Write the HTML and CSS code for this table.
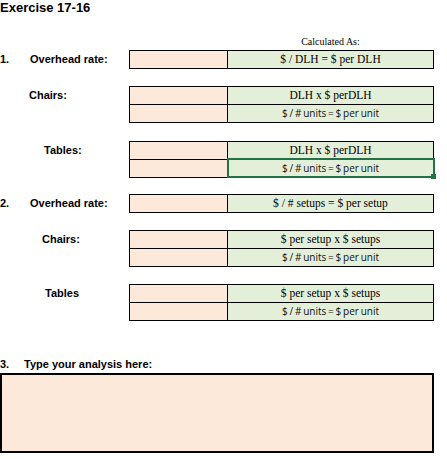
FILE: index.html
```html
<!DOCTYPE html>
<html>
<head>
<meta charset="utf-8">
<link rel="stylesheet" href="styles.css">
</head>
<body>
<h1 class="title">Exercise 17-16</h1>

<div class="calc-head"><span class="calc-head__text">Calculated As:</span></div>

<section class="item item--ov1">
  <div class="label"><span class="num">1.</span><span>Overhead rate:</span></div>
  <div class="box">
    <div class="cell cell--in"></div>
    <div class="cell cell--calc serif">$ / DLH = $ per DLH</div>
  </div>
</section>

<section class="item item--chairs1">
  <div class="label label--chairs1">Chairs:</div>
  <div class="box">
    <div class="cell cell--in"></div>
    <div class="cell cell--calc serif">DLH x $ perDLH</div>
    <div class="cell cell--in"></div>
    <div class="cell cell--calc sans">$ / # units = $ per unit</div>
  </div>
</section>

<section class="item item--tables1">
  <div class="label label--tables1">Tables:</div>
  <div class="box">
    <div class="cell cell--in"></div>
    <div class="cell cell--calc serif">DLH x $ perDLH</div>
    <div class="cell cell--in"></div>
    <div class="cell cell--calc sans cell--selected">$ / # units = $ per unit</div>
  </div>
</section>

<section class="item item--ov2">
  <div class="label"><span class="num">2.</span><span>Overhead rate:</span></div>
  <div class="box">
    <div class="cell cell--in"></div>
    <div class="cell cell--calc serif">$ / # setups = $ per setup</div>
  </div>
</section>

<section class="item item--chairs2">
  <div class="label label--chairs2">Chairs:</div>
  <div class="box">
    <div class="cell cell--in"></div>
    <div class="cell cell--calc serif">$ per setup x $ setups</div>
    <div class="cell cell--in"></div>
    <div class="cell cell--calc sans">$ / # units = $ per unit</div>
  </div>
</section>

<section class="item item--tables2">
  <div class="label label--tables2">Tables</div>
  <div class="box">
    <div class="cell cell--in"></div>
    <div class="cell cell--calc serif">$ per setup x $ setups</div>
    <div class="cell cell--in"></div>
    <div class="cell cell--calc sans">$ / # units = $ per unit</div>
  </div>
</section>

<div class="analysis-head"><span class="num num--3">3.</span><span>Type your analysis here:</span></div>
<div class="analysis"></div>
</body>
</html>
```

FILE: styles.css
```css
html, body {
  margin: 0;
  padding: 0;
  background: #fff;
}
body {
  width: 447px;
  font-family: "Liberation Sans", Arial, sans-serif;
  color: #000;
}
.title {
  margin: 0;
  font-size: 13px;
  line-height: 15px;
  font-weight: bold;
}
.calc-head {
  margin: 21px 0 2px 0;
  display: flex;
}
.calc-head__text {
  margin-left: 228px;
  width: 205px;
  text-align: center;
  font-family: "Liberation Serif", "Times New Roman", serif;
  font-size: 10px;
  line-height: 12px;
}
.item {
  display: flex;
  align-items: flex-start;
}
.item--chairs1 { margin-top: 17px; }
.item--tables1 { margin-top: 18px; }
.item--ov2 { margin-top: 16px; }
.item--chairs2 { margin-top: 17px; }
.item--tables2 { margin-top: 17px; }

.label {
  width: 129px;
  box-sizing: border-box;
  font-size: 11px;
  font-weight: bold;
  line-height: 18px;
  display: flex;
}
.num {
  width: 30px;
  flex: none;
}
.label--chairs1 { padding-left: 29px; }
.label--tables1 { padding-left: 44px; }
.label--chairs2 { padding-left: 42px; }
.label--tables2 { padding-left: 45px; }

.box {
  width: 305px;
  box-sizing: border-box;
  border: 1px solid #000;
  background: #000;
  display: grid;
  grid-template-columns: 97px 1fr;
  grid-auto-rows: 17px;
  gap: 1px;
}
.cell {
  position: relative;
  text-align: center;
  line-height: 17px;
  white-space: nowrap;
}
.cell--in { background: #fde9d9; }
.cell--calc { background: #e4efda; }
.serif {
  font-family: "Liberation Serif", "Times New Roman", serif;
  font-size: 11.5px;
}
.sans {
  font-family: "Open Sans", "Noto Sans", sans-serif;
  font-size: 10px;
  word-spacing: -0.8px;
  color: #111;
}
.cell--selected::after {
  content: "";
  position: absolute;
  top: -2px;
  left: -1px;
  right: -2px;
  bottom: -1px;
  border: 2px solid #217346;
  z-index: 1;
}
.cell--selected::before {
  content: "";
  position: absolute;
  width: 5px;
  height: 5px;
  right: -3px;
  bottom: -2px;
  background: #217346;
  z-index: 2;
}

.analysis-head {
  margin-top: 34px;
  display: flex;
  font-size: 11px;
  font-weight: bold;
  line-height: 18px;
}
.num--3 { width: 24px; }
.analysis {
  width: 434px;
  height: 80px;
  box-sizing: border-box;
  border: 2px solid #000;
  background: #fde9d9;
}
```
